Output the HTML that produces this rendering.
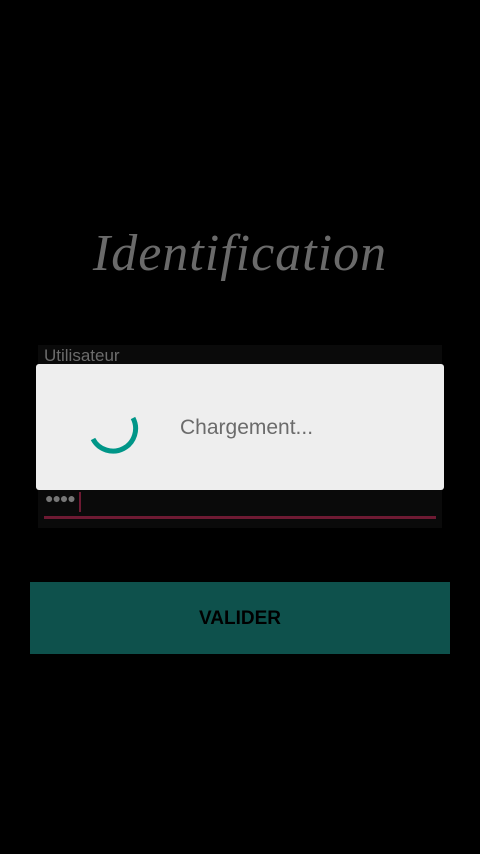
<!DOCTYPE html>
<html><head><meta charset="utf-8"><style>
body{margin:0;width:480px;height:854px;background:#000;position:relative;overflow:hidden;font-family:"Liberation Sans",sans-serif}
.t{position:absolute;left:0;width:480px;top:224px;text-align:center;font-family:"Liberation Serif",serif;font-style:italic;font-size:52px;color:#6a6a6a;letter-spacing:1px}
.box{position:absolute;left:38px;top:345px;width:404px;height:183px;background:#0a0a0a}
.lbl{position:absolute;left:44px;top:346px;font-size:17px;color:#6c6c6c}
.dots{position:absolute;left:45px;top:490px;font-size:14px;color:#777;letter-spacing:-1px}
.cur{position:absolute;left:79px;top:492px;width:2px;height:20px;background:#6e1a33}
.line{position:absolute;left:44px;top:516px;width:392px;height:3px;background:#6e1a33}
.dlg{position:absolute;left:36px;top:364px;width:408px;height:126px;background:#eee;border-radius:3px}
.ct{position:absolute;left:180px;top:416px;font-size:21px;color:#6b6b6b}
.btn{position:absolute;left:30px;top:582px;width:420px;height:72px;background:#0e514c;color:#000;font-weight:bold;font-size:19px;text-align:center;line-height:74px}
</style></head><body>
<div class="t">Identification</div>
<div class="box"></div>
<div class="lbl">Utilisateur</div>
<div class="dots">●●●●</div>
<div class="cur"></div>
<div class="line"></div>
<div class="dlg"></div>
<svg style="position:absolute;left:0;top:0" width="480" height="854"><path d="M133 418 A21 21 0 0 1 93 439" fill="none" stroke="#009688" stroke-width="5"/></svg>
<div class="ct">Chargement...</div>
<div class="btn">VALIDER</div>
</body></html>
